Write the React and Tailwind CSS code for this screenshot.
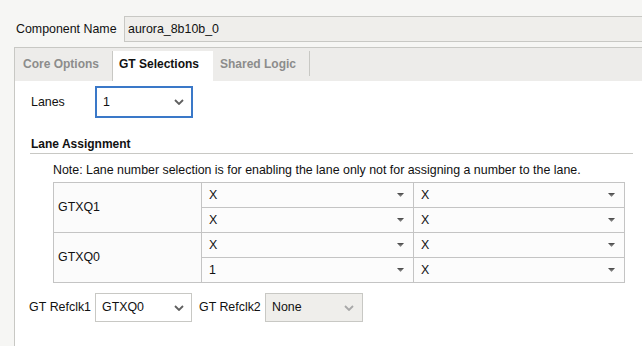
import React from "react";

function Chevron({ color = "#5f5f5f" }) {
  return (
    <svg width="10" height="6" viewBox="0 0 10 6" className="shrink-0">
      <path d="M1 1 L5 5 L9 1" fill="none" stroke={color} strokeWidth="1.8" />
    </svg>
  );
}

function Tri() {
  return (
    <svg width="7" height="4" viewBox="0 0 7 4" className="shrink-0">
      <defs>
        <linearGradient id="tg" x1="0" y1="0" x2="0" y2="1">
          <stop offset="0" stopColor="#444" />
          <stop offset="1" stopColor="#999" />
        </linearGradient>
      </defs>
      <path d="M0 0 H7 L3.5 4 Z" fill="url(#tg)" />
    </svg>
  );
}

function Cell({ value }) {
  return (
    <td className="border border-[#c4c4c4] bg-[#fcfcfc] p-0">
      <div className="flex h-[24px] items-center justify-between pl-[7px] pr-[9px]">
        <span>{value}</span>
        <Tri />
      </div>
    </td>
  );
}

export default function App() {
  return (
    <div className="w-[642px] h-[346px] overflow-hidden bg-[#f6f6f4] font-['Liberation_Sans',Arial,sans-serif] text-[12.4px] text-[#111] flex flex-col">
      <div className="flex items-center pt-[16px] pl-[16px]">
        <div className="w-[108px]">Component Name</div>
        <div className="flex-1 h-[26px] border border-r-0 border-[#c8c8c4] bg-[#efeeeb] flex items-center pl-[3px]">
          aurora_8b10b_0
        </div>
      </div>
      <div className="mt-[5px] ml-[14px] flex-1 border-l border-t border-[#c8c8c4] bg-white flex flex-col">
        <div className="h-[33px] bg-[#edecea] flex items-end font-bold text-[12px]">
          <div className="w-[98px] h-[30px] flex items-center pl-[8px] pb-[4px] text-[#8c8c8c] border-r border-[#c8c8c4]">
            Core Options
          </div>
          <div className="w-[100px] h-[30px] flex items-center pl-[6px] pb-[4px] bg-white text-[#111]">
            GT Selections
          </div>
          <div className="w-[97px] h-[30px] flex items-center pl-[7px] text-[#8c8c8c]">
            <span className="flex-1 pb-[4px]">Shared Logic</span>
            <span className="w-px h-[25px] bg-[#c8c8c4] self-start" />
          </div>
        </div>
        <div className="pt-[5px] pl-[15px] pr-[9px]">
          <div className="flex items-center h-[32px]">
            <div className="w-[65px] pl-[1px]">Lanes</div>
            <div className="w-[98px] h-[32px] border-2 border-[#3a78c8] flex items-center justify-between pl-[6px] pr-[7px]">
              <span>1</span>
              <Chevron />
            </div>
          </div>
          <div className="mt-[19px] pb-[2px] border-b border-[#c8c8c4] font-bold text-[12px] leading-[14px] pl-[1px]">
            Lane Assignment
          </div>
          <div className="mt-[9px] pl-[23px] leading-[14px]">
            Note: Lane number selection is for enabling the lane only not for assigning a number to the lane.
          </div>
          <div className="pl-[23px] mt-[5px]">
            <table className="border-collapse border border-[#c4c4c4]">
              <colgroup>
                <col className="w-[148px]" />
                <col className="w-[212px]" />
                <col className="w-[211px]" />
              </colgroup>
              <tbody>
                <tr>
                  <td rowSpan={2} className="border border-[#c4c4c4] bg-[#fbfbfb] pl-[4px]">GTXQ1</td>
                  <Cell value="X" />
                  <Cell value="X" />
                </tr>
                <tr>
                  <Cell value="X" />
                  <Cell value="X" />
                </tr>
                <tr>
                  <td rowSpan={2} className="border border-[#c4c4c4] bg-[#fbfbfb] pl-[4px]">GTXQ0</td>
                  <Cell value="X" />
                  <Cell value="X" />
                </tr>
                <tr>
                  <Cell value="1" />
                  <Cell value="X" />
                </tr>
              </tbody>
            </table>
          </div>
          <div className="mt-[10px] flex items-center -ml-[1px]">
            <div className="w-[66px]">GT&nbsp;Refclk1</div>
            <div className="w-[97px] h-[29px] border border-[#c8c8c4] bg-white flex items-center justify-between pl-[6px] pr-[7px]">
              <span>GTXQ0</span>
              <Chevron />
            </div>
            <div className="ml-[7px] w-[66px]">GT Refclk2</div>
            <div className="w-[98px] h-[29px] border border-[#c8c8c4] bg-[#efeeeb] flex items-center justify-between pl-[6px] pr-[8px]">
              <span>None</span>
              <Chevron color="#a8a8a8" />
            </div>
          </div>
        </div>
      </div>
    </div>
  );
}
